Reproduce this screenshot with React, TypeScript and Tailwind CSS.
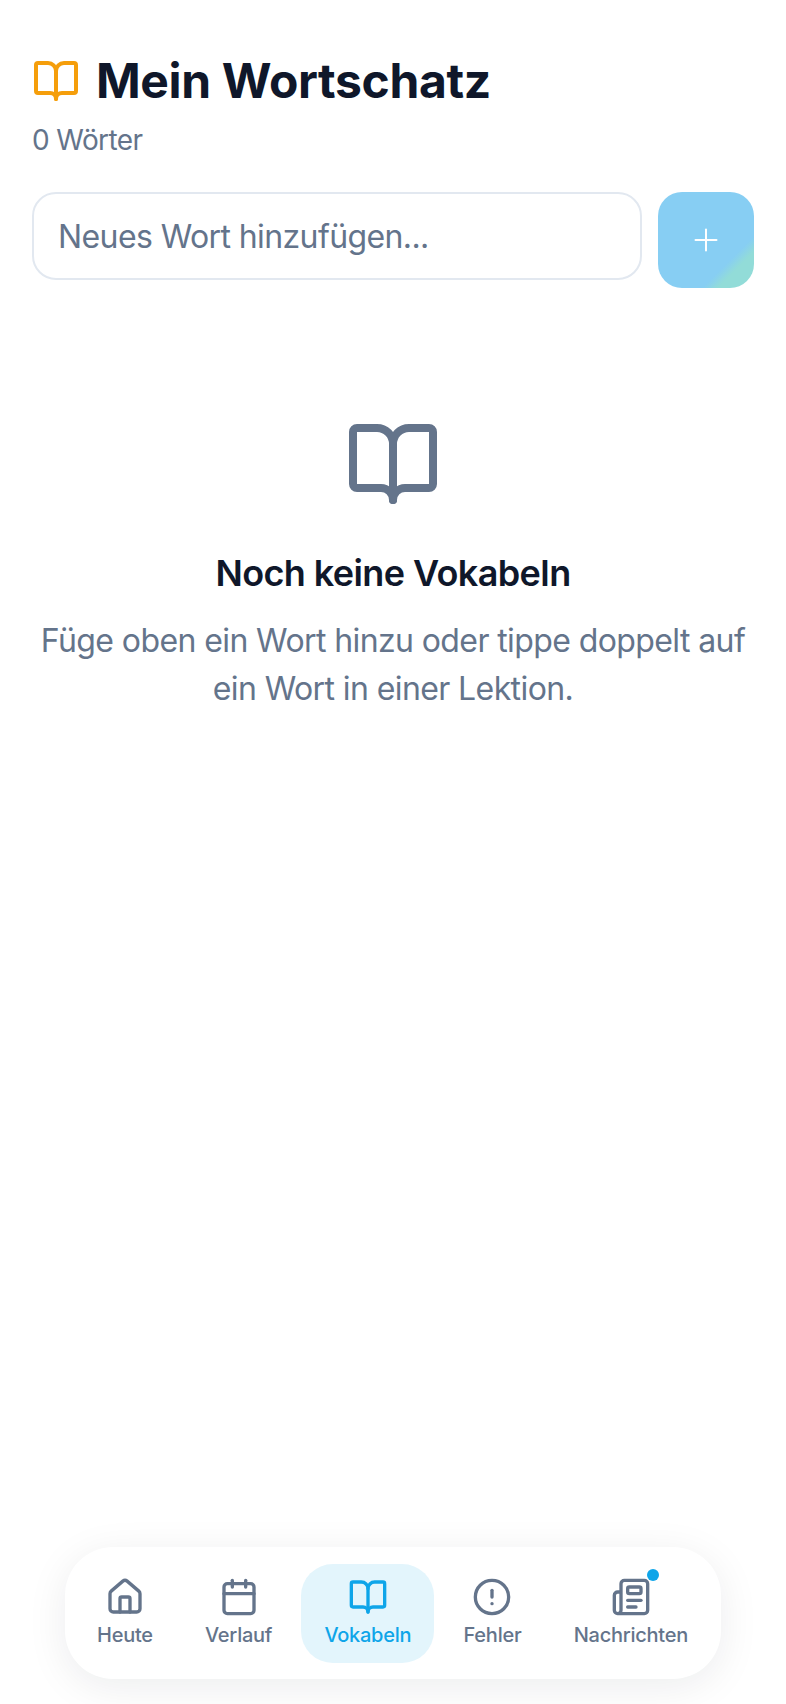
import React from "react";
import { BookOpen, Calendar, CircleAlert, House, Newspaper, Plus } from "lucide-react";

const navItems = [
  { label: "Heute", icon: House },
  { label: "Verlauf", icon: Calendar },
  { label: "Vokabeln", icon: BookOpen, active: true },
  { label: "Fehler", icon: CircleAlert },
  { label: "Nachrichten", icon: Newspaper, dot: true },
];

export default function App() {
  return (
    <div className="flex h-[1704px] w-full flex-col overflow-hidden bg-white font-['Inter',sans-serif]">
      <main className="flex-1 px-8 pt-[57px]">
        {/* Header */}
        <div className="flex items-center gap-4">
          <BookOpen size={48} strokeWidth={2} className="text-[#f59e0b]" />
          <h1 className="text-[48px] leading-[48px] font-bold tracking-[-0.35px] text-[#0f172a]">Mein Wortschatz</h1>
        </div>
        <p className="mt-[19px] text-[28px] leading-[32px] tracking-[-0.6px] text-[#64748b]">0 Wörter</p>

        {/* Add word */}
        <div className="mt-[36px] flex items-start gap-4">
          <input
            placeholder="Neues Wort hinzufügen..."
            className="h-[88px] flex-1 rounded-[24px] border-2 border-[#e2e8f0] bg-white px-6 text-[32px] tracking-[-0.6px] text-[#0f172a] outline-none placeholder:text-[#64748b]"
          />
          <button className="flex h-[96px] w-[96px] items-center justify-center rounded-[24px] bg-[linear-gradient(135deg,#87cef3_0%,#87cef3_73%,#92dcd8_81%)] text-white">
            <Plus size={36} strokeWidth={1.35} />
          </button>
        </div>

        {/* Empty state */}
        <div className="mt-[128px] flex flex-col items-center text-center">
          <BookOpen size={96} strokeWidth={2} className="text-[#64748b]" />
          <h2 className="mt-[37px] text-[36px] leading-[48px] font-semibold tracking-[-0.6px] text-[#0f172a]">Noch keine Vokabeln</h2>
          <p className="mt-[20px] text-[32px] leading-[48px] tracking-[-0.6px] whitespace-nowrap text-[#64748b]">
            Füge oben ein Wort hinzu oder tippe doppelt auf
            <br />
            ein Wort in einer Lektion.
          </p>
        </div>
      </main>

      {/* Bottom nav */}
      <nav className="mx-[65px] mb-[25px] flex items-center justify-between rounded-[48px] bg-white pt-[17px] pr-[10px] pb-[16px] pl-[9px] shadow-[0_8px_40px_rgba(15,23,42,0.08)]">
        {navItems.map((item) => {
          const Icon = item.icon;
          return (
            <div
              key={item.label}
              className={`relative flex h-[99px] flex-col items-center justify-center gap-[4px] rounded-[32px] px-[23px] pb-[2px] ${
                item.active ? "bg-[#e3f5fc] text-[#0ea5e9]" : "text-[#64748b]"
              }`}
            >
              <div className="relative">
                <Icon size={40} strokeWidth={2} />
                {item.dot && <span className="absolute -top-[8px] -right-[8px] h-[12px] w-[12px] rounded-full bg-[#0ea5e9]" />}
              </div>
              <span className="text-[20px] leading-[28px] font-medium tracking-[-0.25px]">{item.label}</span>
            </div>
          );
        })}
      </nav>
    </div>
  );
}
